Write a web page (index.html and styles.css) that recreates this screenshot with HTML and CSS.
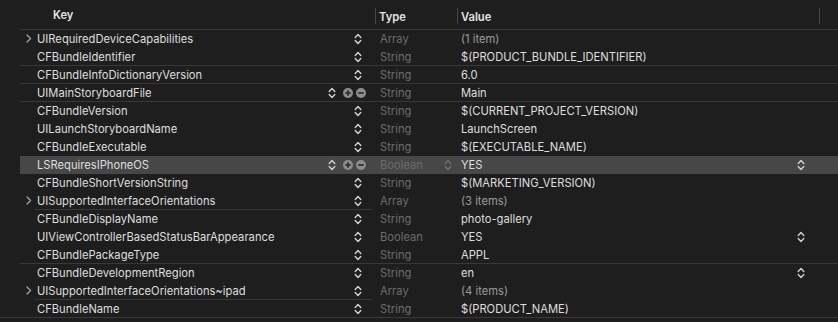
FILE: index.html
```html
<!DOCTYPE html>
<html lang="en">
<head>
    <meta charset="UTF-8">
    <title>Info.plist</title>
    <link rel="stylesheet" href="styles.css">
</head>
<body>

    <svg width="0" height="0" class="defs">
        <symbol id="stepper" viewBox="0 0 8 12">
            <path d="M1.2 4.6 L4 1.6 L6.8 4.6 M1.2 7.4 L4 10.4 L6.8 7.4" fill="none" stroke="currentColor" stroke-width="1.4" stroke-linecap="round" stroke-linejoin="round"/>
        </symbol>
        <symbol id="plus" viewBox="0 0 10 10">
            <circle cx="5" cy="5" r="5" fill="currentColor"/>
            <path d="M5 2.3 V7.7 M2.3 5 H7.7" stroke="#262626" stroke-width="1.6"/>
        </symbol>
        <symbol id="minus" viewBox="0 0 10 10">
            <circle cx="5" cy="5" r="5" fill="currentColor"/>
            <path d="M2.3 5 H7.7" stroke="#262626" stroke-width="1.6"/>
        </symbol>
        <symbol id="disclose" viewBox="0 0 6 9">
            <path d="M1 1 L4.6 4.5 L1 8" fill="none" stroke="currentColor" stroke-width="1.2" stroke-linecap="round" stroke-linejoin="round"/>
        </symbol>
    </svg>

    <div class="plist">
        <div class="head">
            <div class="col key-h">Key</div>
            <div class="col type-h">Type</div>
            <div class="col value-h">Value</div>
        </div>

        <div class="row">
            <div class="key"><svg class="arrow"><use href="#disclose"/></svg><span class="name">UIRequiredDeviceCapabilities</span><span class="ctl"><svg class="step"><use href="#stepper"/></svg></span></div>
            <div class="type">Array</div>
            <div class="value muted">(1 item)</div>
        </div>
        <div class="row sep">
            <div class="key"><span class="name">CFBundleIdentifier</span><span class="ctl"><svg class="step"><use href="#stepper"/></svg></span></div>
            <div class="type">String</div>
            <div class="value">$(PRODUCT_BUNDLE_IDENTIFIER)</div>
        </div>
        <div class="row sep">
            <div class="key"><span class="name">CFBundleInfoDictionaryVersion</span><span class="ctl"><svg class="step"><use href="#stepper"/></svg></span></div>
            <div class="type">String</div>
            <div class="value">6.0</div>
        </div>
        <div class="row sep">
            <div class="key"><span class="name">UIMainStoryboardFile</span><span class="ctl"><svg class="step"><use href="#stepper"/></svg><svg class="btn"><use href="#plus"/></svg><svg class="btn"><use href="#minus"/></svg></span></div>
            <div class="type">String</div>
            <div class="value">Main</div>
        </div>
        <div class="row">
            <div class="key"><span class="name">CFBundleVersion</span><span class="ctl"><svg class="step"><use href="#stepper"/></svg></span></div>
            <div class="type">String</div>
            <div class="value">$(CURRENT_PROJECT_VERSION)</div>
        </div>
        <div class="row">
            <div class="key"><span class="name">UILaunchStoryboardName</span><span class="ctl"><svg class="step"><use href="#stepper"/></svg></span></div>
            <div class="type">String</div>
            <div class="value">LaunchScreen</div>
        </div>
        <div class="row">
            <div class="key"><span class="name">CFBundleExecutable</span><span class="ctl"><svg class="step"><use href="#stepper"/></svg></span></div>
            <div class="type">String</div>
            <div class="value">$(EXECUTABLE_NAME)</div>
        </div>
        <div class="row sel">
            <div class="key"><span class="name">LSRequiresIPhoneOS</span><span class="ctl"><svg class="step"><use href="#stepper"/></svg><svg class="btn"><use href="#plus"/></svg><svg class="btn"><use href="#minus"/></svg></span></div>
            <div class="type">Boolean<svg class="step dim"><use href="#stepper"/></svg></div>
            <div class="value">YES<svg class="step"><use href="#stepper"/></svg></div>
        </div>
        <div class="row">
            <div class="key"><span class="name">CFBundleShortVersionString</span><span class="ctl"><svg class="step"><use href="#stepper"/></svg></span></div>
            <div class="type">String</div>
            <div class="value">$(MARKETING_VERSION)</div>
        </div>
        <div class="row sep-key">
            <div class="key"><svg class="arrow"><use href="#disclose"/></svg><span class="name">UISupportedInterfaceOrientations</span><span class="ctl"><svg class="step"><use href="#stepper"/></svg></span></div>
            <div class="type">Array</div>
            <div class="value muted">(3 items)</div>
        </div>
        <div class="row">
            <div class="key"><span class="name">CFBundleDisplayName</span><span class="ctl"><svg class="step"><use href="#stepper"/></svg></span></div>
            <div class="type">String</div>
            <div class="value">photo-gallery</div>
        </div>
        <div class="row">
            <div class="key"><span class="name">UIViewControllerBasedStatusBarAppearance</span><span class="ctl"><svg class="step"><use href="#stepper"/></svg></span></div>
            <div class="type">Boolean</div>
            <div class="value">YES<svg class="step"><use href="#stepper"/></svg></div>
        </div>
        <div class="row sep">
            <div class="key"><span class="name">CFBundlePackageType</span><span class="ctl"><svg class="step"><use href="#stepper"/></svg></span></div>
            <div class="type">String</div>
            <div class="value">APPL</div>
        </div>
        <div class="row">
            <div class="key"><span class="name">CFBundleDevelopmentRegion</span><span class="ctl"><svg class="step"><use href="#stepper"/></svg></span></div>
            <div class="type">String</div>
            <div class="value">en<svg class="step"><use href="#stepper"/></svg></div>
        </div>
        <div class="row sep-key">
            <div class="key"><svg class="arrow"><use href="#disclose"/></svg><span class="name">UISupportedInterfaceOrientations~ipad</span><span class="ctl"><svg class="step"><use href="#stepper"/></svg></span></div>
            <div class="type">Array</div>
            <div class="value muted">(4 items)</div>
        </div>
        <div class="row last">
            <div class="key"><span class="name">CFBundleName</span><span class="ctl"><svg class="step"><use href="#stepper"/></svg></span></div>
            <div class="type">String</div>
            <div class="value">$(PRODUCT_NAME)</div>
        </div>
    </div>

</body>
</html>
```

FILE: styles.css
```css
body { margin: 0; background: #1f1e1f; font-family: Inter, "Noto Sans", sans-serif; font-size: 11.2px; color: #dedede; }
.defs { position: absolute; }

.plist { width: 838px; border-bottom: 1px solid #3a3a3a; }

.head { display: grid; grid-template-columns: 355px 82px 363px; margin-left: 20px; height: 30px; box-sizing: border-box; border-bottom: 1px solid #383838; }
.head .col { display: flex; align-items: center; font-weight: 600; color: #e4e4e4; padding-top: 1px; }
.key-h { padding-left: 33px; }
.type-h { padding-left: 3px; border-left: 1px solid #454545; margin: 8px 0 5px; }
.value-h { padding-left: 3px; border-left: 1px solid #454545; border-right: 1px solid #454545; margin: 8px 0 5px; }

.row { display: grid; grid-template-columns: 355px 82px 363px; margin-left: 20px; height: 18px; box-sizing: border-box; }
.row.sep { border-bottom: 1px solid #383838; }
.row.sep-key { background: linear-gradient(#383838, #383838) 15px 100% / 337px 1px no-repeat; }
.row.sel { background: #474747; }
.row.last { height: 17px; }

.key, .type, .value { display: flex; align-items: center; white-space: nowrap; }
.key { padding-left: 17px; padding-right: 9px; position: relative; }
.name { flex: 1; }
.arrow { width: 6px; height: 9px; color: #a8a8a8; position: absolute; left: 6px; top: 4px; }
.ctl { display: flex; align-items: center; gap: 3px; }
.step { width: 8px; height: 12px; color: #d0d0d0; }
.btn { width: 10px; height: 10px; color: #8c8c8c; }
.ctl .step { margin-right: 4px; }

.type { padding-left: 5px; color: #6c6c6c; justify-content: space-between; padding-right: 5px; }
.type .step.dim { color: #6c6c6c; }
.value { padding-left: 4px; justify-content: space-between; padding-right: 15px; }
.value.muted { color: #9b9b9b; }
```
